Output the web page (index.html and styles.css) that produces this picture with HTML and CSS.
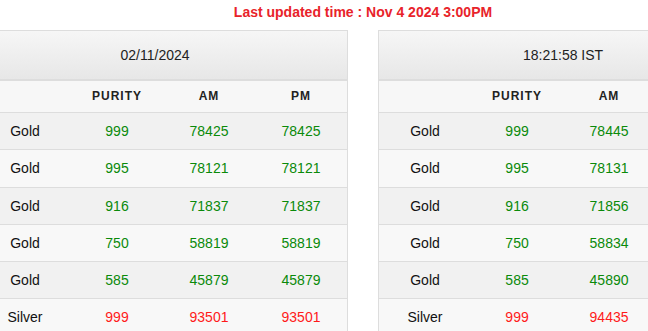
FILE: index.html
```html
<!DOCTYPE html>
<html>
<head>
<meta charset="utf-8">
<link rel="stylesheet" href="styles.css">
</head>
<body>
<div class="wrap">
  <div class="title">Last updated time : Nov 4 2024 3:00PM</div>
  <div class="tables">
    <table class="rates">
      <colgroup><col class="c"><col class="c"><col class="c"><col class="c"></colgroup>
      <thead>
        <tr><th colspan="4" class="top top-left">02/11/2024</th></tr>
        <tr class="cols"><th></th><th>PURITY</th><th>AM</th><th>PM</th></tr>
      </thead>
      <tbody>
        <tr class="odd"><td class="item">Gold</td><td class="g">999</td><td class="g">78425</td><td class="g">78425</td></tr>
        <tr class="even"><td class="item">Gold</td><td class="g">995</td><td class="g">78121</td><td class="g">78121</td></tr>
        <tr class="odd"><td class="item">Gold</td><td class="g">916</td><td class="g">71837</td><td class="g">71837</td></tr>
        <tr class="even"><td class="item">Gold</td><td class="g">750</td><td class="g">58819</td><td class="g">58819</td></tr>
        <tr class="odd"><td class="item">Gold</td><td class="g">585</td><td class="g">45879</td><td class="g">45879</td></tr>
        <tr class="even"><td class="item">Silver</td><td class="r">999</td><td class="r">93501</td><td class="r">93501</td></tr>
      </tbody>
    </table>
    <table class="rates">
      <colgroup><col class="c"><col class="c"><col class="c"><col class="c"></colgroup>
      <thead>
        <tr><th colspan="4" class="top">18:21:58 IST</th></tr>
        <tr class="cols"><th></th><th>PURITY</th><th>AM</th><th>PM</th></tr>
      </thead>
      <tbody>
        <tr class="odd"><td class="item">Gold</td><td class="g">999</td><td class="g">78445</td><td class="g"></td></tr>
        <tr class="even"><td class="item">Gold</td><td class="g">995</td><td class="g">78131</td><td class="g"></td></tr>
        <tr class="odd"><td class="item">Gold</td><td class="g">916</td><td class="g">71856</td><td class="g"></td></tr>
        <tr class="even"><td class="item">Gold</td><td class="g">750</td><td class="g">58834</td><td class="g"></td></tr>
        <tr class="odd"><td class="item">Gold</td><td class="g">585</td><td class="g">45890</td><td class="g"></td></tr>
        <tr class="even"><td class="item">Silver</td><td class="r">999</td><td class="r">94435</td><td class="r"></td></tr>
      </tbody>
    </table>
  </div>
</div>
</body>
</html>
```
FILE: styles.css
```css
html, body {
  margin: 0;
  padding: 0;
  background: #ffffff;
  overflow: hidden;
}
body {
  font-family: "Liberation Sans", Arial, sans-serif;
  font-size: 14px;
  color: #111;
}
.wrap {
  width: 770px;
  margin-left: -22px;
}
.title {
  text-align: center;
  color: #e8232a;
  font-weight: bold;
  font-size: 14px;
  line-height: 18px;
  padding-top: 3px;
  height: 27px;
}
.tables {
  display: flex;
  gap: 30px;
}
.rates {
  width: 370px;
  flex: none;
  table-layout: fixed;
  border-collapse: separate;
  border-spacing: 0;
  border: 1px solid #dddddd;
}
.rates .c {
  width: 92px;
}
.rates th, .rates td {
  text-align: center;
  padding: 0;
}
.rates .top {
  font-weight: normal;
  color: #222;
  padding: 14px 0;
  line-height: 20px;
  background: linear-gradient(to bottom, #f6f6f6, #e7e7e7);
  border-bottom: 2px solid #dddddd;
}
.rates .top-left {
  padding-right: 16px;
}
.rates .cols th {
  background: #f7f7f7;
  font-size: 12px;
  font-weight: bold;
  letter-spacing: 1px;
  color: #222;
  padding: 5px 0 6px;
  line-height: 20px;
}
.rates td {
  padding: 8px 0;
  line-height: 20.3px;
  border-top: 1px solid #dddddd;
}
.rates .odd td {
  background: #f1f1f1;
}
.rates .even td {
  background: #f8f8f8;
}
.rates .item {
  color: #111;
}
.rates .g {
  color: #0a8a0a;
}
.rates .r {
  color: #ff1a1a;
}
```
